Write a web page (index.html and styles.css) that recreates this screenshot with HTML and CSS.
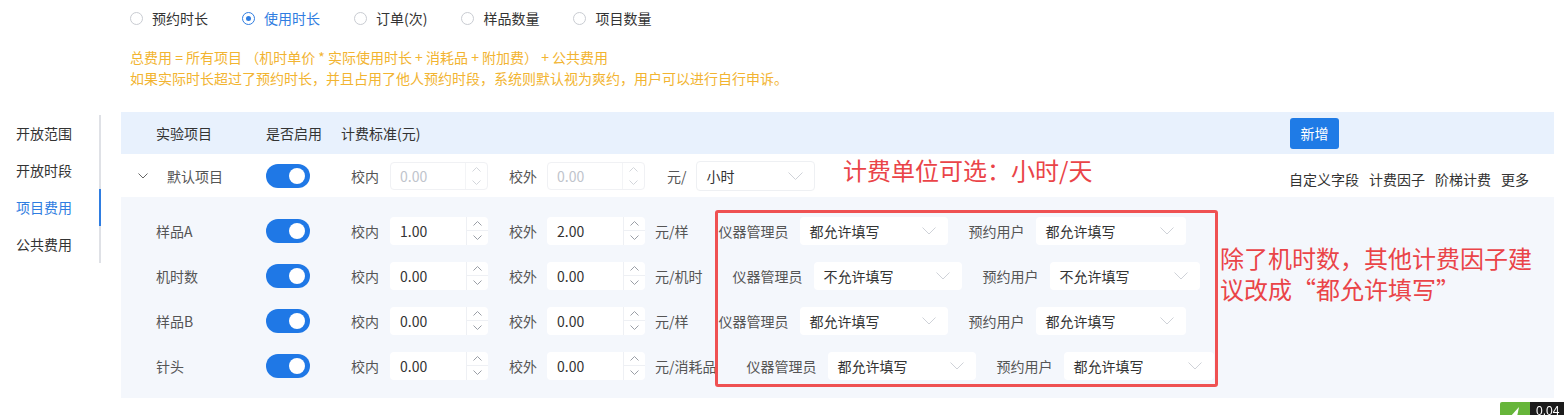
FILE: index.html
```html
<!DOCTYPE html>
<html lang="zh-CN">
<head>
  <meta charset="UTF-8">
  <meta name="viewport" content="width=device-width, initial-scale=1.0">
  <title>项目费用</title>
  <link rel="stylesheet" href="styles.css">
</head>
<body>

  <div class="radios">
    <label class="radio"><span class="dot"></span>预约时长</label>
    <label class="radio on"><span class="dot"></span>使用时长</label>
    <label class="radio"><span class="dot"></span>订单(次)</label>
    <label class="radio"><span class="dot"></span>样品数量</label>
    <label class="radio"><span class="dot"></span>项目数量</label>
  </div>

  <div class="formula">
    <p>总费用 = 所有项目 （机时单价 * 实际使用时长 + 消耗品 + 附加费） + 公共费用</p>
    <p>如果实际时长超过了预约时长，并且占用了他人预约时段，系统则默认视为爽约，用户可以进行自行申诉。</p>
  </div>

  <div class="main">
    <ul class="side">
      <li>开放范围</li>
      <li>开放时段</li>
      <li class="on">项目费用</li>
      <li>公共费用</li>
    </ul>

    <div class="panel">
      <div class="thead">
        <span class="th th-name">实验项目</span>
        <span class="th th-switch">是否启用</span>
        <span class="th">计费标准(元)</span>
        <button class="add">新增</button>
      </div>

      <!-- 默认项目 -->
      <div class="row parent">
        <div class="name">
          <svg class="expand" width="10" height="6" viewBox="0 0 10 6"><path d="M0.5 0.5 5 5 9.5 0.5" fill="none" stroke="#666" stroke-width="1"/></svg>
          默认项目
        </div>
        <div class="cell-switch"><span class="toggle"></span></div>
        <span class="lbl">校内</span>
        <div class="num disabled"><span class="val">0.00</span><span class="spin"><i><svg width="9" height="5" viewBox="0 0 9 5"><path d="M0.5 4.5 4.5 0.5 8.5 4.5" fill="none" stroke="#d3d6db"/></svg></i><i><svg width="9" height="5" viewBox="0 0 9 5"><path d="M0.5 0.5 4.5 4.5 8.5 0.5" fill="none" stroke="#d3d6db"/></svg></i></span></div>
        <span class="lbl lbl-out">校外</span>
        <div class="num disabled"><span class="val">0.00</span><span class="spin"><i><svg width="9" height="5" viewBox="0 0 9 5"><path d="M0.5 4.5 4.5 0.5 8.5 4.5" fill="none" stroke="#d3d6db"/></svg></i><i><svg width="9" height="5" viewBox="0 0 9 5"><path d="M0.5 0.5 4.5 4.5 8.5 0.5" fill="none" stroke="#d3d6db"/></svg></i></span></div>
        <span class="unit-short">元/</span>
        <div class="select select-unit"><span>小时</span><svg width="15" height="8" viewBox="0 0 15 8"><path d="M0.5 0.5 7.5 7.5 14.5 0.5" fill="none" stroke="#cfd2d8"/></svg></div>
        <div class="actions">
          <span>自定义字段</span>
          <span>计费因子</span>
          <span>阶梯计费</span>
          <span>更多</span>
        </div>
      </div>

      <div class="children">
        <div class="row">
          <div class="name">样品A</div>
          <div class="cell-switch"><span class="toggle"></span></div>
          <span class="lbl">校内</span>
          <div class="num"><span class="val">1.00</span><span class="spin"><i><svg width="9" height="5" viewBox="0 0 9 5"><path d="M0.5 4.5 4.5 0.5 8.5 4.5" fill="none" stroke="#9a9ea6"/></svg></i><i><svg width="9" height="5" viewBox="0 0 9 5"><path d="M0.5 0.5 4.5 4.5 8.5 0.5" fill="none" stroke="#9a9ea6"/></svg></i></span></div>
          <span class="lbl lbl-out">校外</span>
          <div class="num"><span class="val">2.00</span><span class="spin"><i><svg width="9" height="5" viewBox="0 0 9 5"><path d="M0.5 4.5 4.5 0.5 8.5 4.5" fill="none" stroke="#9a9ea6"/></svg></i><i><svg width="9" height="5" viewBox="0 0 9 5"><path d="M0.5 0.5 4.5 4.5 8.5 0.5" fill="none" stroke="#9a9ea6"/></svg></i></span></div>
          <span class="unit">元/样</span>
          <span class="lbl">仪器管理员</span>
          <div class="select sel-admin"><span>都允许填写</span><svg width="14" height="8" viewBox="0 0 14 8"><path d="M0.5 0.5 7 7 13.5 0.5" fill="none" stroke="#cfd2d8"/></svg></div>
          <span class="lbl">预约用户</span>
          <div class="select sel-user"><span>都允许填写</span><svg width="14" height="8" viewBox="0 0 14 8"><path d="M0.5 0.5 7 7 13.5 0.5" fill="none" stroke="#cfd2d8"/></svg></div>
        </div>

        <div class="row">
          <div class="name">机时数</div>
          <div class="cell-switch"><span class="toggle"></span></div>
          <span class="lbl">校内</span>
          <div class="num"><span class="val">0.00</span><span class="spin"><i><svg width="9" height="5" viewBox="0 0 9 5"><path d="M0.5 4.5 4.5 0.5 8.5 4.5" fill="none" stroke="#9a9ea6"/></svg></i><i><svg width="9" height="5" viewBox="0 0 9 5"><path d="M0.5 0.5 4.5 4.5 8.5 0.5" fill="none" stroke="#9a9ea6"/></svg></i></span></div>
          <span class="lbl lbl-out">校外</span>
          <div class="num"><span class="val">0.00</span><span class="spin"><i><svg width="9" height="5" viewBox="0 0 9 5"><path d="M0.5 4.5 4.5 0.5 8.5 4.5" fill="none" stroke="#9a9ea6"/></svg></i><i><svg width="9" height="5" viewBox="0 0 9 5"><path d="M0.5 0.5 4.5 4.5 8.5 0.5" fill="none" stroke="#9a9ea6"/></svg></i></span></div>
          <span class="unit">元/机时</span>
          <span class="lbl">仪器管理员</span>
          <div class="select sel-admin"><span>不允许填写</span><svg width="14" height="8" viewBox="0 0 14 8"><path d="M0.5 0.5 7 7 13.5 0.5" fill="none" stroke="#cfd2d8"/></svg></div>
          <span class="lbl">预约用户</span>
          <div class="select sel-user"><span>不允许填写</span><svg width="14" height="8" viewBox="0 0 14 8"><path d="M0.5 0.5 7 7 13.5 0.5" fill="none" stroke="#cfd2d8"/></svg></div>
        </div>

        <div class="row">
          <div class="name">样品B</div>
          <div class="cell-switch"><span class="toggle"></span></div>
          <span class="lbl">校内</span>
          <div class="num"><span class="val">0.00</span><span class="spin"><i><svg width="9" height="5" viewBox="0 0 9 5"><path d="M0.5 4.5 4.5 0.5 8.5 4.5" fill="none" stroke="#9a9ea6"/></svg></i><i><svg width="9" height="5" viewBox="0 0 9 5"><path d="M0.5 0.5 4.5 4.5 8.5 0.5" fill="none" stroke="#9a9ea6"/></svg></i></span></div>
          <span class="lbl lbl-out">校外</span>
          <div class="num"><span class="val">0.00</span><span class="spin"><i><svg width="9" height="5" viewBox="0 0 9 5"><path d="M0.5 4.5 4.5 0.5 8.5 4.5" fill="none" stroke="#9a9ea6"/></svg></i><i><svg width="9" height="5" viewBox="0 0 9 5"><path d="M0.5 0.5 4.5 4.5 8.5 0.5" fill="none" stroke="#9a9ea6"/></svg></i></span></div>
          <span class="unit">元/样</span>
          <span class="lbl">仪器管理员</span>
          <div class="select sel-admin"><span>都允许填写</span><svg width="14" height="8" viewBox="0 0 14 8"><path d="M0.5 0.5 7 7 13.5 0.5" fill="none" stroke="#cfd2d8"/></svg></div>
          <span class="lbl">预约用户</span>
          <div class="select sel-user"><span>都允许填写</span><svg width="14" height="8" viewBox="0 0 14 8"><path d="M0.5 0.5 7 7 13.5 0.5" fill="none" stroke="#cfd2d8"/></svg></div>
        </div>

        <div class="row">
          <div class="name">针头</div>
          <div class="cell-switch"><span class="toggle"></span></div>
          <span class="lbl">校内</span>
          <div class="num"><span class="val">0.00</span><span class="spin"><i><svg width="9" height="5" viewBox="0 0 9 5"><path d="M0.5 4.5 4.5 0.5 8.5 4.5" fill="none" stroke="#9a9ea6"/></svg></i><i><svg width="9" height="5" viewBox="0 0 9 5"><path d="M0.5 0.5 4.5 4.5 8.5 0.5" fill="none" stroke="#9a9ea6"/></svg></i></span></div>
          <span class="lbl lbl-out">校外</span>
          <div class="num"><span class="val">0.00</span><span class="spin"><i><svg width="9" height="5" viewBox="0 0 9 5"><path d="M0.5 4.5 4.5 0.5 8.5 4.5" fill="none" stroke="#9a9ea6"/></svg></i><i><svg width="9" height="5" viewBox="0 0 9 5"><path d="M0.5 0.5 4.5 4.5 8.5 0.5" fill="none" stroke="#9a9ea6"/></svg></i></span></div>
          <span class="unit">元/消耗品</span>
          <span class="lbl">仪器管理员</span>
          <div class="select sel-admin"><span>都允许填写</span><svg width="14" height="8" viewBox="0 0 14 8"><path d="M0.5 0.5 7 7 13.5 0.5" fill="none" stroke="#cfd2d8"/></svg></div>
          <span class="lbl">预约用户</span>
          <div class="select sel-user"><span>都允许填写</span><svg width="14" height="8" viewBox="0 0 14 8"><path d="M0.5 0.5 7 7 13.5 0.5" fill="none" stroke="#cfd2d8"/></svg></div>
        </div>

        <!-- 批注 -->
        <div class="mark-box"></div>
        <div class="note note-factor">除了机时数，其他计费因子建<br>议改成“都允许填写”</div>
      </div>

      <div class="note note-unit">计费单位可选：小时/天</div>
    </div>
  </div>

  <div class="speed">
    <span class="speed-icon"><svg width="14" height="13" viewBox="0 0 14 13"><path d="M2 13 L11 3 L9 13 Z" fill="#fff"/></svg></span>
    <span class="speed-val">0.04</span>
  </div>

</body>
</html>
```

FILE: styles.css
```css
* {
  box-sizing: border-box;
}

body {
  margin: 0;
  font-family: "Noto Sans CJK SC", "Noto Sans", sans-serif;
  font-size: 14px;
  color: #333;
  background: #fff;
}

/* 计费方式 */
.radios {
  display: flex;
  align-items: center;
  height: 36px;
  padding-left: 130px;
}

.radio {
  display: flex;
  align-items: center;
  margin-right: 34px;
  color: #333;
}

.radio .dot {
  position: relative;
  width: 13px;
  height: 13px;
  margin-right: 9px;
  border: 1px solid #c9ccd2;
  border-radius: 50%;
}

.radio.on {
  color: #2f7de1;
}

.radio.on .dot {
  border-color: #2f7de1;
}

.radio.on .dot::after {
  content: "";
  position: absolute;
  left: 3px;
  top: 3px;
  width: 5px;
  height: 5px;
  border-radius: 50%;
  background: #2f7de1;
}

.formula {
  margin-top: 11px;
  padding-left: 130px;
  color: #f2b431;
  line-height: 21px;
}

.formula p {
  margin: 0;
}

/* 主体 */
.main {
  display: flex;
  margin-top: 23px;
}

.side {
  align-self: flex-start;
  width: 101px;
  margin: 3px 20px 0 0;
  padding: 0;
  list-style: none;
}

.side li {
  height: 37px;
  line-height: 36px;
  padding-left: 16px;
  border-right: 2px solid #dfe1e6;
}

.side li.on {
  color: #2f7de1;
  border-right-color: #2f7de1;
}

.panel {
  position: relative;
  width: 1433px;
}

.thead {
  display: flex;
  align-items: center;
  height: 42px;
  background: #e8f1fd;
}

.th-name {
  width: 145px;
  padding-left: 35px;
}

.th-switch {
  width: 75px;
}

.add {
  width: 49px;
  height: 31px;
  margin-left: auto;
  margin-right: 215px;
  padding: 0;
  border: 0;
  border-radius: 3px;
  background: #1f7be6;
  color: #fff;
  font-family: inherit;
  font-size: 14px;
}

/* 行 */
.row {
  display: flex;
  align-items: center;
  height: 45px;
}

.parent {
  height: 43px;
  background: #fff;
}

.name {
  width: 145px;
  padding-left: 35px;
  color: #555;
}

.parent .name {
  display: flex;
  align-items: center;
  padding-left: 17px;
}

.expand {
  margin-right: 19px;
}

.cell-switch {
  width: 85px;
  display: flex;
}

.toggle {
  position: relative;
  width: 44px;
  height: 24px;
  border-radius: 12px;
  background: #1f78e6;
}

.toggle::after {
  content: "";
  position: absolute;
  right: 5px;
  top: 4px;
  width: 16px;
  height: 16px;
  border-radius: 50%;
  background: #fff;
}

.lbl {
  margin-right: 11px;
  color: #555;
  white-space: nowrap;
}

.lbl-out {
  margin-left: 21px;
  margin-right: 10px;
}

.num {
  display: flex;
  width: 98px;
  height: 28px;
  border-radius: 4px;
  background: #fff;
}

.num .val {
  flex: 1;
  padding-left: 10px;
  line-height: 28px;
  color: #333;
}

.num .spin {
  display: flex;
  flex-direction: column;
  width: 22px;
  border-left: 1px solid #eef0f4;
}

.spin i {
  flex: 1;
  display: flex;
  align-items: center;
  justify-content: center;
}

.spin i + i {
  border-top: 1px solid #eef0f4;
}

.num.disabled {
  border: 1px solid #f0f1f4;
}

.num.disabled .val {
  line-height: 26px;
  padding-left: 9px;
  color: #c0c4cc;
}

.num.disabled .spin {
  border-left-color: #f3f4f6;
}

.num.disabled .spin i + i {
  border-top: 0;
}

.unit {
  margin-left: 10px;
  margin-right: 30px;
  color: #555;
  white-space: nowrap;
}

.unit-short {
  margin-left: 22px;
  margin-right: 9px;
  color: #555;
}

.select {
  display: flex;
  align-items: center;
  justify-content: space-between;
  height: 28px;
  padding: 0 12px 0 10px;
  border-radius: 4px;
  background: #fff;
  color: #333;
}

.select-unit {
  width: 119px;
  height: 30px;
  padding-right: 11px;
  border: 1px solid #eef0f3;
}

.sel-admin {
  width: 148px;
  margin-right: 21px;
}

.sel-user {
  width: 150px;
}

.actions {
  display: flex;
  gap: 10px;
  margin-left: auto;
  margin-top: 6px;
  padding-right: 25px;
  color: #333;
}

.children {
  position: relative;
  padding: 11px 0 10px;
  background: #f4f7fc;
}

/* 批注 */
.mark-box {
  position: absolute;
  left: 594px;
  top: 13px;
  width: 503px;
  height: 177px;
  border: 3px solid #ef5152;
  border-radius: 3px;
}

.note {
  position: absolute;
  color: #ea4448;
  font-size: 24px;
  white-space: nowrap;
}

.note-factor {
  left: 1099px;
  top: 45px;
  line-height: 31px;
}

.note-unit {
  left: 722px;
  top: 43px;
  line-height: 30px;
}

.speed {
  position: fixed;
  right: 0;
  bottom: 0;
  display: flex;
  height: 13px;
  overflow: hidden;
}

.speed-icon {
  display: flex;
  justify-content: center;
  width: 30px;
  padding-top: 2px;
  border-radius: 2px 0 0 0;
  background: #66b53a;
}

.speed-val {
  width: 34px;
  padding: 3px 0 0 6px;
  background: #1b1b1b;
  color: #fff;
  font-family: "Liberation Sans", sans-serif;
  font-size: 12px;
  line-height: 12px;
}
```
